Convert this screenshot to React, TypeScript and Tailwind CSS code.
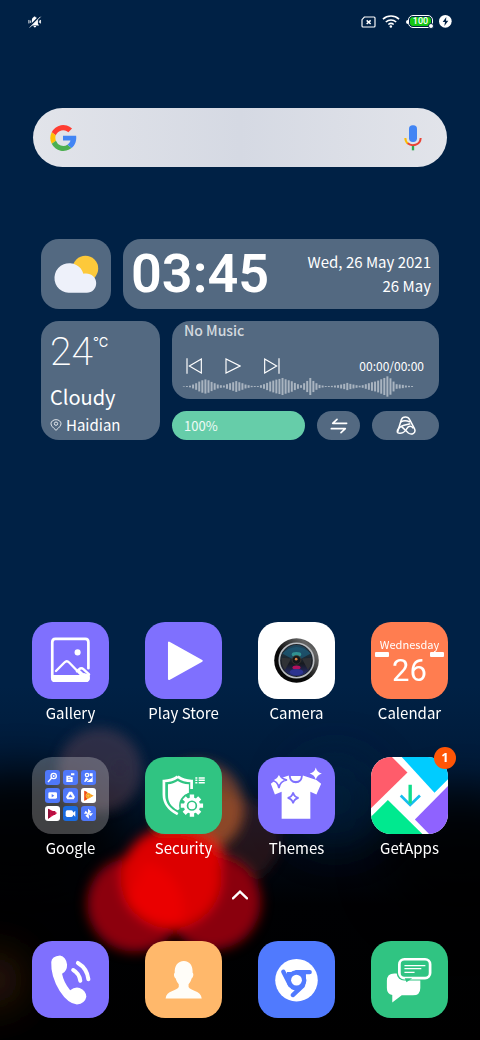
import type { ReactNode } from 'react';

const WAVE = [
  2, 3, 5, 12, 20, 30, 38, 43, 38, 28, 20, 12, 8, 6, 14, 20, 26, 33, 26, 20, 12, 8, 4, 3, 3, 8, 14, 22, 30, 36, 42, 46,
  52, 44, 38, 32, 22, 14, 8, 20, 34, 52, 34, 20, 10, 6, 3, 3, 4, 6, 8, 12, 16, 22, 16, 12, 8, 5, 8, 14, 20, 26, 30, 36,
  44, 52, 62, 50, 30, 14, 12, 10, 6, 4, 3,
];

function Wallpaper() {
  return (
    <svg
      className="absolute inset-0 -z-10 h-full w-full"
      viewBox="0 0 480 1040"
      preserveAspectRatio="xMidYMid slice"
      aria-hidden="true"
    >
      <defs>
        <linearGradient id="sky" x1="0" y1="0" x2="0" y2="1">
          <stop offset="0" stopColor="#002145" />
          <stop offset="0.66" stopColor="#002145" />
          <stop offset="0.74" stopColor="#001a38" />
          <stop offset="0.82" stopColor="#000812" />
          <stop offset="0.87" stopColor="#000103" />
          <stop offset="1" stopColor="#000" />
        </linearGradient>
        <filter id="soft" x="-50%" y="-50%" width="200%" height="200%">
          <feGaussianBlur stdDeviation="6" />
        </filter>
        <filter id="haze" x="-100%" y="-100%" width="300%" height="300%">
          <feGaussianBlur stdDeviation="22" />
        </filter>
      </defs>
      <rect width="480" height="1040" fill="url(#sky)" />
      <ellipse cx="20" cy="840" rx="100" ry="70" fill="#000" opacity="0.85" filter="url(#haze)" />
      <ellipse cx="460" cy="860" rx="80" ry="70" fill="#000" opacity="0.8" filter="url(#haze)" />
      <ellipse cx="335" cy="800" rx="45" ry="45" fill="#00203f" opacity="0.6" filter="url(#haze)" />
      <g filter="url(#soft)">
        <circle cx="100" cy="770" r="42" fill="#6b4a55" opacity="0.42" />
        <circle cx="120" cy="768" r="5" fill="#1b1f38" opacity="0.6" />
        <circle cx="238" cy="840" r="42" fill="#5a2020" opacity="0.4" />
        <circle cx="198" cy="807" r="46" fill="#a35330" opacity="0.65" />
        <circle cx="214" cy="815" r="28" fill="#b05a20" opacity="0.4" />
        <circle cx="135" cy="904" r="48" fill="#8c0008" />
        <circle cx="213" cy="902" r="48" fill="#8a0008" />
        <ellipse cx="177" cy="856" rx="46" ry="28" fill="#e61010" />
        <circle cx="171" cy="878" r="50" fill="#dc0000" />
        <path d="M145 862a48 48 0 0 1 36 62 50 50 0 0 1-54-24z" fill="#f00000" opacity="0.7" />
      </g>
      <circle cx="-5" cy="980" r="26" fill="#4a2610" opacity="0.8" filter="url(#haze)" />
    </svg>
  );
}

function StatusBar() {
  return (
    <header className="flex h-[43px] items-center justify-between px-7 text-white">
      <svg className="size-[14px]" viewBox="0 0 48 48" fill="currentColor" aria-label="Silent">
        <path d="M23 5c2 0 3 1 3 3 6 2 8 6 8 13v9l4 6H9l4-6v-9c0-7 2-11 6-13 0-2 2-3 4-3zM19 38h9c0 6-9 6-9 0z" />
        <path d="M3 17v12M8 19v8M43 17v12M39 19v8" stroke="currentColor" strokeWidth="3" />
        <path d="M4 41 41 4" stroke="#002145" strokeWidth="6" />
        <path d="M6 43 43 6" stroke="currentColor" strokeWidth="3" />
      </svg>
      <div className="flex items-center gap-[6px]">
        <svg className="h-3 w-[15px]" viewBox="0 0 45 36" fill="none" stroke="currentColor" aria-label="No SIM">
          <path d="M10 3h29q3 0 3 3v24q0 3-3 3H6q-3 0-3-3V11z" strokeWidth="3.500" />
          <path d="m17 13 12 11M29 13 17 24" strokeWidth="4.500" />
        </svg>
        <svg className="h-[13px] w-[18px]" viewBox="0 0 57 39" fill="none" stroke="currentColor" aria-label="Wi-Fi">
          <path d="M3 12a38 38 0 0 1 51 0M12 21a25 25 0 0 1 33 0M20 29a13 13 0 0 1 17 0" strokeWidth="5" />
          <circle cx="28" cy="35" r="4" fill="currentColor" stroke="none" />
        </svg>
        <div className="relative flex h-[13px] items-center">
          <span className="h-1 w-[2px] rounded-l bg-white" />
          <span className="flex h-[13px] w-[25px] items-center justify-center rounded-[5px] border border-white p-px">
            <span className="flex h-full w-full items-center justify-center rounded-[3px] bg-[#14c414] font-[Roboto,sans-serif] text-[9px] leading-none font-medium">
              100
            </span>
          </span>
          <span className="absolute -right-px -bottom-px size-[6px] rounded-full border border-[#002145] bg-white" />
        </div>
        <svg className="size-[13px]" viewBox="0 0 39 39" aria-label="Charging">
          <circle cx="19" cy="19" r="19" fill="#fff" />
          <path d="M22 6 11 21h7l-2 12 12-16h-7z" fill="#002145" />
        </svg>
      </div>
    </header>
  );
}

function SearchBar() {
  return (
    <form className="mx-[33px] mt-[65px] flex h-[59px] items-center rounded-full bg-linear-to-r from-[#e2e4ea] via-[#d5d9e3] to-[#e2e4ea] px-4">
      <svg className="size-[28px] shrink-0" viewBox="0 0 48 48" aria-hidden="true">
        <path fill="#FF3D32" d="M4.600 14.300A22 22 0 0 1 39.500 7.800l-6.300 6.400A13.500 13.500 0 0 0 11.600 19.200z" />
        <path fill="#FFC107" d="M4.600 14.300a22 22 0 0 0 .1 19.600l7.200-5.300a13.500 13.500 0 0 1-.3-9.400z" />
        <path fill="#4CAF50" d="M4.700 33.900A22 22 0 0 0 38.600 41l-7-5.500A13.500 13.500 0 0 1 11.900 28.600z" />
        <path fill="#4285F4" d="M24 20h22.500c1.200 8.500-1.700 16.300-7.900 21l-7-5.500c2.700-1.700 4.500-4.300 5.200-7.100H24z" />
      </svg>
      <input type="search" aria-label="Search" className="h-full min-w-0 flex-1 bg-transparent px-3 outline-none" />
      <button type="button" aria-label="Voice search" className="shrink-0 px-[9px]">
        <svg className="h-[26px] w-[18px]" viewBox="0 0 54 78" fill="none" strokeWidth="6">
          <rect x="15" y="1" width="24" height="50" rx="11" fill="#4285F4" />
          <path d="M4 39c0 7 3 13 8 17" stroke="#FBBC05" />
          <path d="M11 55c12 10 38 7 39-16" stroke="#EA4335" />
          <path d="M27 63v13" stroke="#34A853" strokeWidth="7" />
        </svg>
      </button>
    </form>
  );
}

function Widgets() {
  return (
    <section className="mx-[41px] mt-[72px] flex flex-col gap-3 text-white">
      <div className="flex gap-3">
        <div className="size-[70px] shrink-0 rounded-[18px] bg-[#536981]">
          <svg viewBox="0 0 208 208" role="img" aria-label="Partly cloudy">
            <circle cx="132" cy="88" r="38" fill="#fdc93a" />
            <path
              d="M82 160a44 44 0 1 1 24-82c10 5 16 13 20 25 20-4 38 8 38 28 0 17-12 29-28 29z"
              fill="#eef1fa"
            />
          </svg>
        </div>
        <div className="flex min-w-0 flex-1 items-center justify-between rounded-[18px] bg-[#536981] px-2">
          <time className="font-[Roboto,sans-serif] text-[54px] leading-[66px] font-semibold">03:45</time>
          <div className="text-right text-[15px] leading-6">
            <p>Wed, 26 May 2021</p>
            <p>26 May</p>
          </div>
        </div>
      </div>

      <div className="flex gap-3">
        <div className="flex w-[119px] shrink-0 flex-col rounded-[18px] bg-[#536981] px-[9px] pt-2">
          <div className="flex items-start">
            <span className="font-[Roboto,sans-serif] text-[39px] leading-[46px] font-extralight">24</span>
            <span className="pt-1 font-[Inter,sans-serif] text-[13px] leading-[18px]">°C</span>
          </div>
          <p className="mt-2 text-[20px] leading-7">Cloudy</p>
          <p className="mt-1 flex items-center gap-1 text-[15px] leading-5">
            <svg className="size-3" viewBox="0 0 36 36" fill="none" stroke="currentColor" strokeWidth="2.500">
              <path d="M18 34C8 25 3 20 3 14a15 12 0 0 1 30 0c0 6-5 11-15 20z" />
              <circle cx="18" cy="14" r="5" />
            </svg>
            Haidian
          </p>
        </div>

        <div className="flex min-w-0 flex-1 flex-col gap-3">
          <div className="h-[78px] rounded-[18px] bg-[#536981] px-[9px]">
            <p className="px-[3px] text-[14px] leading-[18px] font-medium text-white/75">No Music</p>
            <div className="mt-[17px] flex h-5 items-center justify-between pr-[6px] pl-[5px]">
              <div className="flex gap-[23px]">
                <button type="button" aria-label="Previous">
                  <svg className="size-4" viewBox="0 0 48 48" fill="none" stroke="currentColor" strokeWidth="3.500">
                    <path d="M3 1v46M46 3v42L10 24z" />
                  </svg>
                </button>
                <button type="button" aria-label="Play">
                  <svg className="size-4" viewBox="0 0 48 48" fill="none" stroke="currentColor" strokeWidth="3.500">
                    <path d="M3 3v42l42-21z" />
                  </svg>
                </button>
                <button type="button" aria-label="Next">
                  <svg className="size-4" viewBox="0 0 48 48" fill="none" stroke="currentColor" strokeWidth="3.500">
                    <path d="M45 1v46M2 3v42l36-21z" />
                  </svg>
                </button>
              </div>
              <span className="text-[12px] leading-5">00:00/00:00</span>
            </div>
            <svg className="h-[21px] w-[235px] max-w-full" viewBox="0 0 705 64" aria-hidden="true">
              {WAVE.map((h, i) => (
                <rect key={i} x={i * 9.4} y={32 - h / 2} width="6" height={h} fill="#a9b4c0" />
              ))}
            </svg>
          </div>
          <div className="flex h-[29px] gap-3">
            <div className="flex flex-1 items-center rounded-full bg-[#66cda9] px-3 text-[13px] text-white/90">100%</div>
            <button
              type="button"
              aria-label="Transfer"
              className="flex w-[43px] items-center justify-center rounded-full bg-[#536981]"
            >
              <svg className="h-4 w-[18px]" viewBox="0 0 54 48" fill="none" stroke="currentColor" strokeWidth="5">
                <path d="M50 16H8L21 4M4 32h42L33 44" strokeLinecap="round" strokeLinejoin="round" />
              </svg>
            </button>
            <button
              type="button"
              aria-label="Shortcuts"
              className="flex w-[67px] items-center justify-center rounded-full bg-[#536981]"
            >
              <svg className="h-[19px] w-5" viewBox="0 0 60 57" fill="none" stroke="currentColor" strokeWidth="4.500">
                <path d="M4 50 16 11C20 0 36 0 41 11l14 26c7 14-8 21-18 14L16 31" />
                <path d="M4 50c12 5 23-2 29-13 5-9 15-7 19 0M4 49c0-10 9-18 20-21l19-5M14 18c9-5 19-4 28 0" />
              </svg>
            </button>
          </div>
        </div>
      </div>
    </section>
  );
}

/* one tile of the home grid, the label is left out in the dock */
function AppTile({ name, color, label = true, badge, children }: {
  name: string;
  color: string;
  label?: boolean;
  badge?: number;
  children: ReactNode;
}) {
  return (
    <button type="button" aria-label={name} className="relative flex w-[77px] flex-col items-center text-white">
      <span className={`block size-[77px] overflow-hidden rounded-[20px] ${color}`}>{children}</span>
      {label && <span className="mt-[2px] text-[15px] leading-6 whitespace-nowrap">{name}</span>}
      {badge && (
        <span className="absolute -top-[10px] -right-2 flex size-[22px] items-center justify-center rounded-full bg-[#ff5505] font-['Open_Sans',sans-serif] text-[13px] font-bold">
          {badge}
        </span>
      )}
    </button>
  );
}

function Glyph({ children }: { children: ReactNode }) {
  return (
    <svg className="size-full" viewBox="0 0 228 228" fill="none" aria-hidden="true">
      {children}
    </svg>
  );
}

function Mini({ color, children }: { color: string; children: ReactNode }) {
  return (
    <svg className={`size-[15px] rounded-[3px] ${color}`} viewBox="0 0 45 45" fill="none" aria-hidden="true">
      {children}
    </svg>
  );
}

function GoogleFolder() {
  return (
    <span className="grid size-full grid-cols-[repeat(3,15px)] place-content-center gap-[3px]">
      <Mini color="bg-[#4f78fa]">
        <circle cx="26" cy="18" r="8" stroke="#fff" strokeWidth="4" />
        <circle cx="26" cy="18" r="3" fill="#fff" />
        <path d="m20 24-11 12" stroke="#fff" strokeWidth="4" />
      </Mini>
      <Mini color="bg-[#4f78fa]">
        <path d="M10 17h13v4h6v15H10z" fill="#fff" />
        <path d="M15 23h7M15 29h9" stroke="#4f78fa" strokeWidth="2" />
        <path d="M24 10h10v6H24z" fill="#fff" />
      </Mini>
      <Mini color="bg-[#4f78fa]">
        <circle cx="18" cy="15" r="7" fill="#fff" />
        <path d="m9 35 6-13 8 6 12-8v16H22z" fill="#fff" />
        <path d="M26 10h9v10l-9-3z" fill="#fff" />
        <circle cx="18" cy="15" r="3" fill="#4f78fa" />
        <path d="m14 36 19-14" stroke="#4f78fa" strokeWidth="3" />
      </Mini>
      <Mini color="bg-[#4f78fa]">
        <rect x="10" y="13" width="26" height="19" rx="4" fill="#fff" />
        <path d="m20 18 8 5-8 5z" fill="#4f78fa" />
      </Mini>
      <Mini color="bg-[#4f78fa]">
        <path d="M18 11h9l9 16-4 7H13l-4-7z" fill="#fff" />
        <path d="m22 19-6 9h13z" fill="#4f78fa" />
      </Mini>
      <Mini color="bg-white">
        <path d="M10 8v30l28-15z" fill="#ff9c1a" />
        <path d="M10 8v30l8-4V12z" fill="#ee4a22" />
        <circle cx="22" cy="23" r="8" fill="#ffc53d" />
        <circle cx="22" cy="23" r="5" stroke="#e9711c" strokeWidth="2" />
      </Mini>
      <Mini color="bg-white">
        <path d="M9 8v30l28-17z" fill="#e0154f" />
        <path d="M9 8v30l7-4V12z" fill="#8d1238" />
        <path d="M17 15h14v12H17z" fill="#b80f42" />
      </Mini>
      <Mini color="bg-[#1a6be0]">
        <rect x="8" y="13" width="22" height="20" rx="5" fill="#fff" />
        <path d="m28 22 9-8v18l-9-8z" fill="#fff" />
      </Mini>
      <Mini color="bg-[#4f78fa]">
        <path d="M21 21V8l10 9-7 5h12l-7 9-6-7 1 14-11-9 7-6H9l5-9z" fill="#fff" />
      </Mini>
    </span>
  );
}

function CalendarFace() {
  return (
    <span className="flex size-full flex-col items-center pt-[14px]">
      <span className="text-[11px] leading-4">Wednesday</span>
      <span className="flex w-full justify-between px-1">
        <span className="h-[5px] w-[14px] rounded-[1px] bg-white" />
        <span className="h-[5px] w-[14px] rounded-[1px] bg-white" />
      </span>
      <span className="font-[Roboto,sans-serif] text-[31px] leading-7">26</span>
    </span>
  );
}

function CameraGlyph() {
  return (
    <Glyph>
      <defs>
        <linearGradient id="rim" x1="0" y1="1" x2="1" y2="0">
          <stop offset="0.4" stopColor="#080808" />
          <stop offset="0.8" stopColor="#666" />
          <stop offset="1" stopColor="#1c1c1c" />
        </linearGradient>
        <linearGradient id="lens" x1="0" y1="0" x2="0" y2="1">
          <stop offset="0" stopColor="#1e4961" />
          <stop offset="0.35" stopColor="#1d2c38" />
          <stop offset="0.6" stopColor="#171a1f" />
          <stop offset="1" stopColor="#262d78" />
        </linearGradient>
      </defs>
      <circle cx="114" cy="114" r="66" fill="url(#rim)" />
      <circle cx="114" cy="114" r="51" fill="#20242a" stroke="#b9bcc0" strokeWidth="5" />
      <circle cx="114" cy="114" r="46" fill="url(#lens)" />
      <path d="M72 93q42-38 84 0l-28 16h-28z" fill="#1d5b79" opacity="0.7" />
      <path d="m70 106 28 2-18 34q-12-14-10-36zM158 106l-28 2 18 34q12-14 10-36z" fill="#303236" />
      <ellipse cx="114" cy="96" rx="14" ry="7" fill="#37a39c" opacity="0.8" />
      <circle cx="114" cy="112" r="13" fill="#15171b" stroke="#4b4034" strokeWidth="2" />
      <circle cx="113" cy="110" r="4" fill="#d98146" />
      <ellipse cx="114" cy="135" rx="12" ry="6" fill="#b3125d" />
      <ellipse cx="114" cy="148" rx="20" ry="9" fill="#2c3390" />
    </Glyph>
  );
}

export default function App() {
  return (
    <div className="relative isolate flex min-h-screen flex-col overflow-hidden bg-[#002145] font-['Noto_Sans_CJK_SC',sans-serif]">
      <Wallpaper />
      <StatusBar />
      <SearchBar />
      <Widgets />

      <main className="mt-auto flex flex-col gap-8 px-8 pt-10">
        <div className="flex justify-between">
          <AppTile name="Gallery" color="bg-[#7f70fe]">
            <Glyph>
              <path
                d="M167 137V60q0-10-9-10H69q-9 0-9 10v104q0 10 9 10h89q9 0 9-10"
                stroke="#fff"
                strokeWidth="8"
                strokeLinecap="round"
              />
              <path d="M58 157h84l12-6 17 6v11q-2 10-12 10H68q-10 0-10-10z" fill="#fff" />
              <path
                d="m71 145 25-25q7-7 14 0l33 34M133 146l6-6q7-6 14 0l16 15-10 8-18-17"
                stroke="#fff"
                strokeWidth="7"
                strokeLinecap="round"
                strokeLinejoin="round"
              />
              <circle cx="135" cy="90" r="9" fill="#fff" />
            </Glyph>
          </AppTile>
          <AppTile name="Play Store" color="bg-[#7f70fe]">
            <Glyph>
              <path d="M71 61v108l97-54z" fill="#fff" stroke="#fff" strokeWidth="6" strokeLinejoin="round" />
            </Glyph>
          </AppTile>
          <AppTile name="Camera" color="bg-white">
            <CameraGlyph />
          </AppTile>
          <AppTile name="Calendar" color="bg-[#ff7d50]">
            <CalendarFace />
          </AppTile>
        </div>

        <div className="flex justify-between">
          <AppTile name="Google" color="bg-white/25">
            <GoogleFolder />
          </AppTile>
          <AppTile name="Security" color="bg-[#30c482]">
            <Glyph>
              <path
                d="M97 58c-12 9-24 13-41 13v40c0 28 14 44 41 58M97 58c12 9 24 13 41 13v24"
                stroke="#fff"
                strokeWidth="8"
              />
              <path d="M97 71c-9 6-18 9-29 10v32c0 21 9 33 29 45l13-9 6-35 14-8V81c-15-1-24-4-33-10z" fill="#fff" />
              <circle cx="139" cy="144" r="38" fill="#30c482" />
              <g stroke="#fff" strokeWidth="13">
                <path d="M139 111v66M106 144h66M116 121l46 46M162 121l-46 46" />
              </g>
              <circle cx="139" cy="144" r="24" fill="#fff" />
              <circle cx="139" cy="144" r="13" fill="#fff" stroke="#30c482" strokeWidth="5" />
              <path d="M149 62h6M149 69h6M149 76h6M159 62h18M159 69h18M159 76h18" stroke="#fff" strokeWidth="4.500" />
            </Glyph>
          </AppTile>
          <AppTile name="Themes" color="bg-[#7f70fe]">
            <Glyph>
              <path
                d="m91 55-38 12-15 12 12 32 20-8v80h85v-80l18 8 14-32-14-11-40-13q-2 23-21 23T91 55z"
                fill="#fff"
              />
              <path d="M97 56h30q0 15-15 15T97 56z" fill="#fff" />
              <path
                d="M62 44q3 21 24 24-21 3-24 24-3-21-24-24 21-3 24-24z"
                fill="#fff"
                stroke="#7f70fe"
                strokeWidth="5"
              />
              <path d="M171 31q4 15 18 18-14 4-18 18-3-14-18-18 15-3 18-18z" fill="#fff" />
              <path
                d="M104 105q3 13 16 16-13 3-16 16-3-13-16-16 13-3 16-16z"
                fill="#fff"
                stroke="#7f70fe"
                strokeWidth="5"
              />
            </Glyph>
          </AppTile>
          <AppTile name="GetApps" color="bg-white" badge={1}>
            <Glyph>
              <path d="M0 0h62l46 46L0 152z" fill="#ff5c6b" />
              <path d="M91 0h137v66l-40 40z" fill="#00ccff" />
              <path d="m50 127 102 101H0v-51z" fill="#00e98f" />
              <path d="m130 185 98-99v142h-56z" fill="#8f62ff" />
              <path d="m88 114 28 28 29-28" stroke="#16bdf0" strokeWidth="8" />
              <path d="M116 82v56" stroke="#10dd8c" strokeWidth="10" />
            </Glyph>
          </AppTile>
        </div>
      </main>

      <button type="button" aria-label="Open app drawer" className="mx-auto mt-[29px] text-white">
        <svg className="h-3 w-4" viewBox="0 0 48 36" fill="none" stroke="currentColor" strokeWidth="7">
          <path d="m3 28 21-20 21 20" strokeLinecap="round" />
        </svg>
      </button>

      <nav aria-label="Dock" className="mt-10 flex justify-between px-8 pb-[22px]">
        <AppTile name="Phone" color="bg-[#7f70fe]" label={false}>
          <Glyph>
            <path
              d="M57 62q1-16 26-19 18 4 21 27 0 19-15 27 5 26 24 49 13-11 28-7 19 8 20 26-4 20-28 23-26-2-51-40Q55 104 57 62z"
              fill="#fff"
            />
            <path
              d="M122 86q18 10 21 32M136 65q27 16 31 48"
              stroke="#fff"
              strokeWidth="12"
              strokeLinecap="round"
            />
          </Glyph>
        </AppTile>
        <AppTile name="Contacts" color="bg-[#ffb86b]" label={false}>
          <Glyph>
            <path
              d="M115 59c18 1 27 13 26 35 4 3 2 14-3 17-2 8-5 12-9 17v8c5 12 37 10 39 34H61c2-24 34-22 39-34v-8c-4-5-7-9-9-17-5-3-7-14-3-17-1-22 9-34 27-35z"
              fill="#fffdf8"
            />
          </Glyph>
        </AppTile>
        <AppTile name="Browser" color="bg-[#507afe]" label={false}>
          <Glyph>
            <circle cx="114" cy="116" r="63" fill="#fff" />
            <g stroke="#507afe" strokeWidth="13" strokeLinecap="round">
              <circle cx="114" cy="116" r="23" />
              <path d="M114 92h39M75 91l20 39M103 160l30-28" />
            </g>
            <path d="M86 92h56v16l-8 27-16 15-20-8-16-34z" fill="#507afe" />
            <circle cx="114" cy="116" r="16" fill="#fff" />
          </Glyph>
        </AppTile>
        <AppTile name="Messages" color="bg-[#30c482]" label={false}>
          <Glyph>
            <path d="M69 96h55q22 0 22 22v21q0 22-22 22H91l-28 21v-22q-16-4-16-21v-21q0-22 22-22z" fill="#fff" />
            <rect x="76" y="46" width="107" height="71" rx="22" fill="#30c482" />
            <rect x="84" y="54" width="91" height="56" rx="15" stroke="#fff" strokeWidth="8" />
            <path d="M100 110h22l-17 12z" fill="#30c482" />
            <path d="M99 73h62M99 82h50M99 93h30" stroke="#fff" strokeWidth="3.500" />
          </Glyph>
        </AppTile>
      </nav>
    </div>
  );
}
